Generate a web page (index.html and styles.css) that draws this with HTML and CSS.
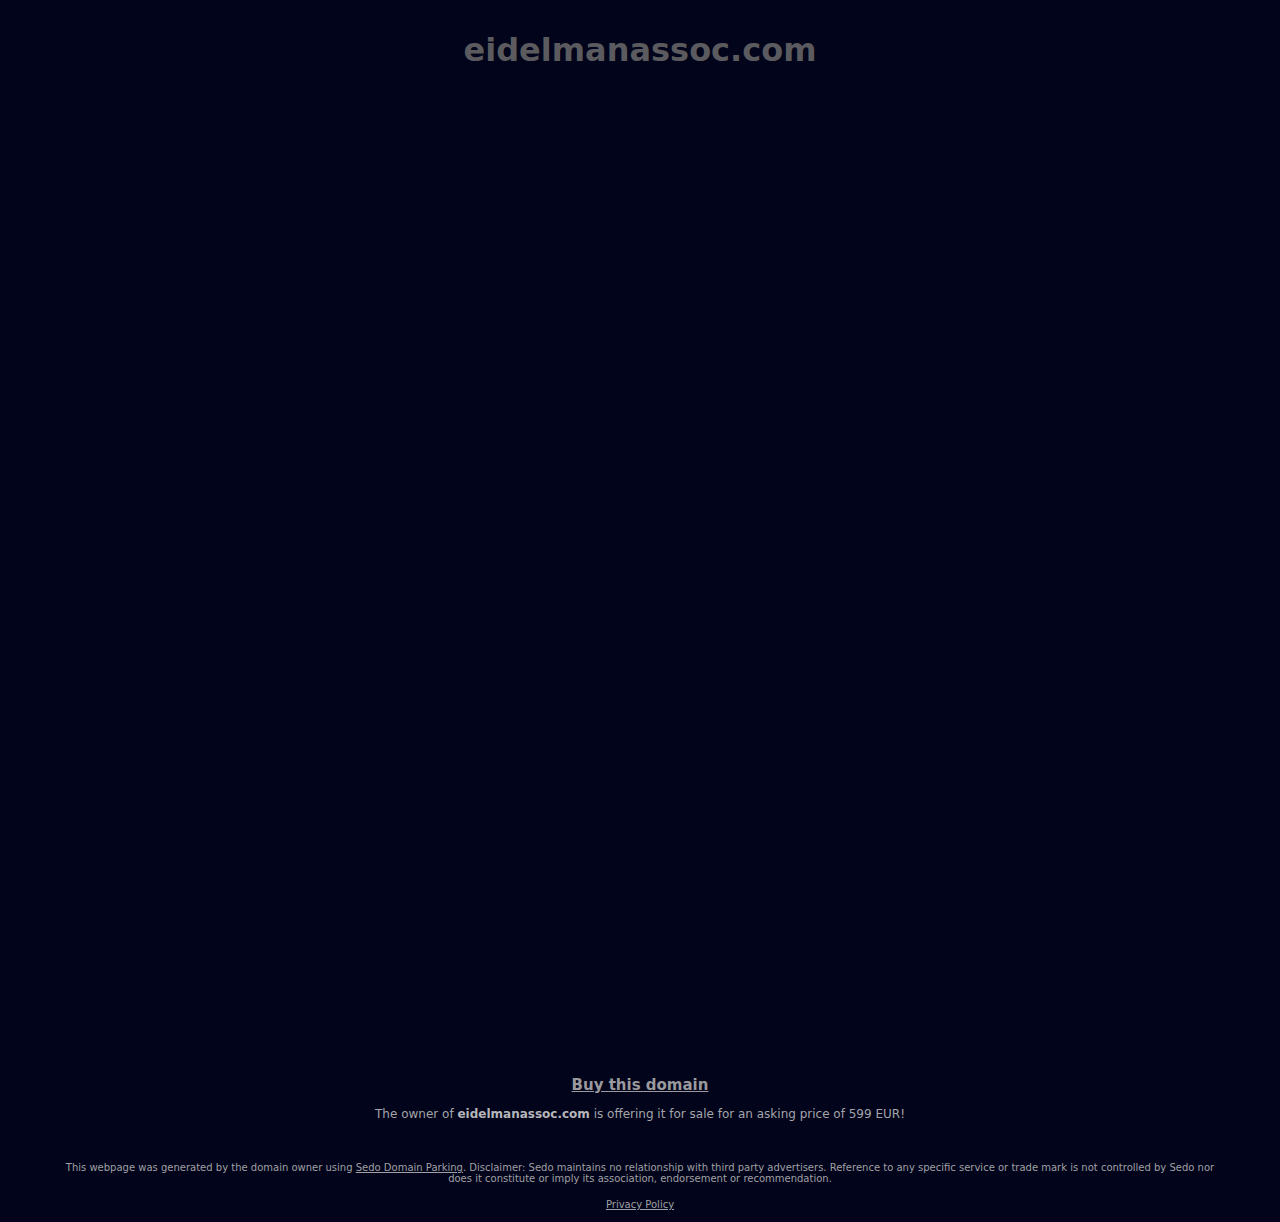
FILE: index.html
```html
<!DOCTYPE html>
<html>
<head>
<meta charset="utf-8">
<link rel="stylesheet" href="styles.css">
</head>
<body>
<div class="page">
  <header class="header">
    <h1 class="domain">eidelmanassoc.com</h1>
  </header>
  <main class="content"></main>
  <section class="sale">
    <a class="buy" href="#">Buy this domain</a>
    <p class="owner">The owner of <strong>eidelmanassoc.com</strong> is offering it for sale for an asking price of 599 EUR!</p>
  </section>
  <footer class="footer">
    <p class="disclaimer">This webpage was generated by the domain owner using <a href="#">Sedo Domain Parking</a>. Disclaimer: Sedo maintains no relationship with third party advertisers. Reference to any specific service or trade mark is not controlled by Sedo nor does it constitute or imply its association, endorsement or recommendation.</p>
    <a class="privacy" href="#">Privacy Policy</a>
  </footer>
</div>
</body>
</html>
```
FILE: styles.css
```css
html, body {
  margin: 0;
  padding: 0;
  background: #01041a;
}
body {
  font-family: "DejaVu Sans", sans-serif;
}
.page {
  min-height: 1222px;
  display: flex;
  flex-direction: column;
  align-items: center;
}
.header {
  padding-top: 30px;
}
.domain {
  margin: 0;
  font-size: 32px;
  line-height: 40px;
  font-weight: bold;
  color: #5b5b5f;
  text-align: center;
}
.content {
  flex: 1;
}
.sale {
  text-align: center;
}
.buy {
  display: inline-block;
  font-size: 15px;
  font-weight: bold;
  color: #9a9a9e;
  line-height: 20px;
}
.owner {
  margin: 10px 0 0;
  font-size: 12px;
  line-height: 18px;
  color: #a5a5aa;
}
.owner strong {
  color: #b6b6ba;
}
.footer {
  margin-top: 39px;
  padding: 0 60px 10px;
  text-align: center;
  color: #a0a0a5;
}
.disclaimer {
  margin: 0;
  font-size: 10px;
  line-height: 11px;
}
.disclaimer a, .privacy {
  color: #a0a0a5;
}
.privacy {
  display: inline-block;
  margin-top: 15px;
  font-size: 10px;
  line-height: 12px;
}
```
